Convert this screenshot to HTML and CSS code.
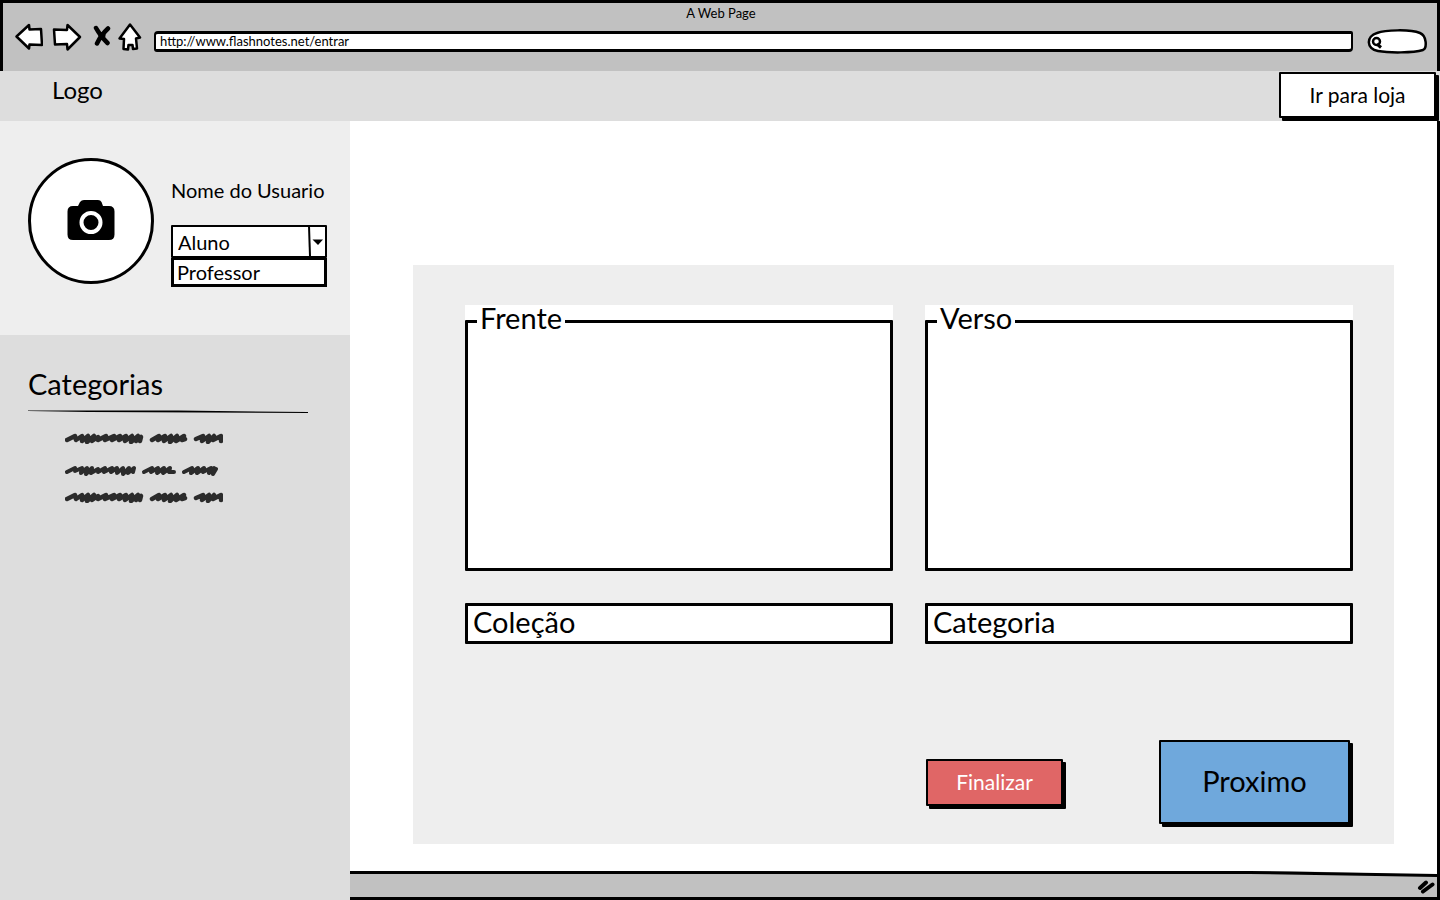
FILE: index.html
```html
<!DOCTYPE html>
<html lang="pt-BR">
<head>
<meta charset="utf-8">
<title>A Web Page</title>
<link rel="stylesheet" href="styles.css">
</head>
<body>
<div class="window">
  <header class="chrome">
    <div class="chrome-title">A Web Page</div>
    <div class="chrome-tools">
      <nav class="chrome-nav" aria-label="Navegador">
        <button class="tool tool-back" aria-label="Voltar"><svg width="28" height="28" viewBox="0 0 28 28"><path class="shape" d="M1.500 13.500 L14 2 L14.500 6.500 L26 6 L27 22 L14.500 21.500 L14 25.500 Z"/></svg></button>
        <button class="tool tool-forward" aria-label="Avançar"><svg width="30" height="28" viewBox="0 0 30 28"><path class="shape" d="M28 14 L15.500 2 L15 7 L2 6.500 L3 21.500 L15 21 L15.500 26.500 Z"/></svg></button>
        <button class="tool tool-stop" aria-label="Parar"><svg width="18" height="28" viewBox="0 0 18 28"><path d="M3 5 Q8 14 14.500 20 M15 5.500 Q8 12 4 20.500" fill="none" stroke="#000" stroke-width="4.500" stroke-linecap="round"/><circle cx="9" cy="12.500" r="3.500"/></svg></button>
        <button class="tool" aria-label="Início"><svg width="24" height="28" viewBox="0 0 24 28"><path class="shape" d="M12 1.500 L22 14.500 L18 15.500 L19 25.500 L15 26 L14.500 22 L10.500 22 L10 26.500 L5.500 26 L6 16 L1.500 15.500 Z"/></svg></button>
      </nav>
      <input class="address" type="text" aria-label="Endereço" value="http://www.flashnotes.net/entrar">
      <button class="search" aria-label="Buscar"><svg width="60" height="25" viewBox="0 0 60 25"><path class="shape" d="M10 4 C18 1 43 0 53 4 C60 7 60 19 56 21 C46 24 22 24 11 22 C-1 20 -1 7 10 4 Z"/><circle cx="9.500" cy="12.500" r="3.500" class="shape"/><path d="M10 15 L14 18.500" stroke="#000" stroke-width="3"/></svg></button>
    </div>
  </header>

  <div class="topbar">
    <a class="logo" href="#">Logo</a>
    <button class="btn btn-store">Ir para loja</button>
  </div>

  <div class="body">
    <aside class="sidebar">
      <section class="profile">
        <button class="avatar" aria-label="Foto do usuário">
          <svg width="48" height="44" viewBox="0 0 48 44"><path d="M6 7 H11 L13 3 Q14.500 1 17 1 H31 Q33.500 1 34.500 3 L36 7 H42 Q47.500 7 47.500 12.500 V35.500 Q47.500 41 42 41 H6 Q.5 41 .5 35.500 V12.500 Q.5 7 6 7 Z"/><circle cx="24" cy="23.500" r="9.500" fill="#000" stroke="#fff" stroke-width="4"/></svg>
        </button>
        <div class="profile-info">
          <label class="profile-name" for="role">Nome do Usuario</label>
          <div class="select-wrap">
            <select class="select" id="role"><option>Aluno</option></select>
            <svg class="select-arrow" width="19" height="32" viewBox="0 0 19 32"><path d="M1 1 L2 31" stroke="#000" stroke-width="2"/><path d="M4.500 14.500 H15 L10 20 Z"/></svg>
          </div>
          <ul class="options"><li class="option">Professor</li></ul>
        </div>
      </section>
      <section class="categories">
        <h2 class="heading">Categorias</h2>
        <svg class="rule" height="4" viewBox="0 0 280 4" preserveAspectRatio="none"><path d="M0 .5 L150 .5 L280 2 V3 L60 2 L0 1 Z"/></svg>
        <ul class="scribbles">
          <li class="scribble"><svg width="158" height="12" viewBox="0 0 158 12"><use href="#scribble-a"/></svg></li>
          <li class="scribble scribble-thin"><svg width="158" height="12" viewBox="0 0 158 12">
            <path class="scrawl thin" d="M2 8 L10 4 L10 7 L17 4 L16 9 L22 4 L21 10 L27 4 L26 9 L33 5 L33 8 L40 4 L39 8 L47 4 L46 8 L52 4 L52 9 L58 4 L58 10 L64 4 L63 9 L69 4 L68 8"/>
            <path class="scrawl thin" d="M79 8 L87 4 L86 8 L93 4 L92 9 L99 4 L98 9 L105 4 L104 8 L109 8"/>
            <path class="scrawl thin" d="M119 8 L127 4 L126 9 L133 4 L132 9 L139 4 L138 8 L146 4 L144 9 L149 4 L148 10 L151 5"/></svg></li>
          <li class="scribble"><svg width="158" height="12" viewBox="0 0 158 12">
            <g id="scribble-a" class="scrawl">
              <path d="M2 8 L10 4 L11 8 L17 4 L17 9 L23 4 L22 10 L29 4 L27 9 L33 5 L33 8 L41 4 L40 8 L49 4 L47 8 L55 4 L54 8 L61 4 L60 9 L67 4 L66 10 L73 4 L71 9 L76 5 L75 9"/>
              <path d="M87 8 L94 4 L93 8 L100 4 L99 9 L106 4 L105 10 L112 4 L111 9 L119 4 L117 8 L120 7"/>
              <path d="M131 7 L138 4 L137 9 L144 4 L143 10 L149 4 L148 8 L156 4 L156 9"/>
            </g></svg></li>
        </ul>
      </section>
    </aside>

    <div class="content">
      <main class="main">
        <form class="panel">
          <div class="side">
            <fieldset class="card"><legend class="card-title">Frente</legend><textarea class="card-text" aria-label="Frente"></textarea></fieldset>
          </div>
          <div class="side">
            <fieldset class="card"><legend class="card-title">Verso</legend><textarea class="card-text" aria-label="Verso"></textarea></fieldset>
          </div>
          <input class="field" type="text" aria-label="Coleção" value="Coleção">
          <input class="field" type="text" aria-label="Categoria" value="Categoria">
          <div class="actions">
            <button class="btn btn-finish" type="button">Finalizar</button>
            <button class="btn btn-next" type="button">Proximo</button>
          </div>
        </form>
      </main>
      <footer class="statusbar">
        <svg class="status-edge" height="6" viewBox="0 0 1087 6" preserveAspectRatio="none"><path d="M0 0 H1087 V4 L940 0 Z" fill="#fff"/><path d="M0 1.500 H900 L1087 4.500" fill="none" stroke="#000" stroke-width="3"/></svg>
        <svg class="grip" width="18" height="14" viewBox="0 0 18 14"><path d="M3 8 L9 2.500 M6 11.500 L15.500 4.500" stroke="#000" stroke-width="4" stroke-linecap="round"/></svg>
      </footer>
    </div>
  </div>
</div>
</body>
</html>
```
FILE: styles.css
```css
* { box-sizing: border-box; }
body {
  margin: 0;
  font-family: Lato, "Open Sans", sans-serif;
  font-size: 20px;
  line-height: 24px;
  color: #000;
  background: #fff;
}
button, input, select, textarea { font: inherit; color: inherit; margin: 0; }
ul { list-style: none; margin: 0; padding: 0; }
.window { display: flex; flex-direction: column; min-height: 100vh; }

.chrome { height: 71px; background: #c1c1c1; border: 3px solid #000; border-bottom: 0; padding: 2px 10px 0 12px; }
.chrome-title { text-align: center; font-size: 13px; line-height: 16px; }
.chrome-tools { display: flex; align-items: center; height: 32px; }
.chrome-nav { display: flex; }
.tool, .search { display: block; padding: 0; border: 0; background: none; line-height: 0; }
.tool-back { margin-right: 9px; }
.tool-forward { margin-right: 11px; }
.tool-stop { margin-right: 7px; }
.shape { fill: #fff; stroke: #000; stroke-width: 2.5; stroke-linejoin: round; }
.address {
  flex: 1;
  min-width: 0;
  height: 21px;
  margin: 8px 14px 0 12px;
  padding: 0 4px;
  border: 3px solid #000;
  border-width: 3px 2px 3px 2px;
  border-radius: 4px 2px 4px 3px;
  background: #fff;
  font-size: 13px;
  line-height: 15px;
}
.search { margin-top: 8px; }

.topbar { display: flex; justify-content: space-between; height: 50px; background: #ddd; }
.logo { padding: 7px 0 0 52px; color: inherit; text-decoration: none; font-size: 24px; }
.btn { border: 2px solid #000; border-radius: 1px; box-shadow: 3px 3px 0 #000; padding: 0; }
.btn-store { width: 157px; height: 46px; margin: 1px 4px 0 0; background: #fff; font-size: 21px; }

.body { flex: 1; display: flex; }
.sidebar { width: 350px; flex: none; background: #ddd; }
.profile { display: flex; height: 214px; padding: 37px 23px 0 28px; background: #eee; }
.avatar {
  display: flex;
  align-items: center;
  justify-content: center;
  flex: none;
  width: 126px;
  height: 126px;
  padding: 0;
  border: 3px solid #000;
  border-radius: 50%;
  background: #fff;
}
.profile-info { flex: 1; margin: 20px 0 0 17px; }
.profile-name { display: block; margin-bottom: 23px; white-space: nowrap; }
.select-wrap { position: relative; height: 33px; }
.select {
  appearance: none;
  width: 100%;
  height: 33px;
  padding: 0 20px 0 5px;
  border: 2px solid #000;
  border-radius: 1px;
  background: #fff;
}
.select-arrow { position: absolute; top: 0; right: 0; pointer-events: none; }
.options { border: 3px solid #000; border-top-width: 2px; height: 29px; background: #fff; }
.option { padding-left: 3px; }

.categories { padding: 33px 42px 0 28px; }
.heading { margin: 0; font-weight: 400; font-size: 29px; line-height: 32px; }
.rule { display: block; width: 100%; margin-top: 10px; }
.scribbles { padding: 18px 0 0 37px; }
.scribble { height: 32px; line-height: 0; }
.scribble-thin { height: 27px; }
.scrawl { fill: none; stroke: #2b2b2b; stroke-width: 4.5; stroke-linejoin: round; stroke-linecap: round; }
.thin { stroke-width: 4; }

.content { flex: 1; display: flex; flex-direction: column; min-width: 0; border-right: 3px solid #000; }
.main { flex: 1; padding: 144px 43px 27px 63px; }
.panel {
  display: grid;
  grid-template-columns: 1fr 1fr;
  gap: 32px;
  padding: 40px 41px 17px 52px;
  background: #eee;
}
.side { background: #fff; }
.card { margin: 0; padding: 0 9px; border: 3px solid #000; border-radius: 1px; min-width: 0; }
.card-title { height: 32px; padding: 0 3px; font-size: 29px; line-height: 26px; }
.card-text { display: block; width: 100%; height: 231px; padding: 0; border: 0; resize: none; background: transparent; }
.field {
  width: 100%;
  height: 41px;
  padding: 0 5px 4px;
  border: 3px solid #000;
  border-radius: 1px;
  background: #fff;
  font-size: 29px;
}
.actions { grid-column: 2; display: flex; align-items: center; justify-content: space-between; margin-top: 64px; padding: 0 3px 3px 1px; }
.btn-finish { width: 137px; height: 47px; background: #e06666; color: #fff; font-size: 21px; }
.btn-next { width: 191px; height: 84px; padding-bottom: 2px; background: #6fa8dc; font-size: 29px; }

.statusbar { position: relative; display: flex; justify-content: flex-end; align-items: center; height: 29px; padding: 5px 2px 0 0; background: #c1c1c1; border-bottom: 3px solid #000; }
.status-edge { position: absolute; top: 0; left: 0; width: 100%; }
```
